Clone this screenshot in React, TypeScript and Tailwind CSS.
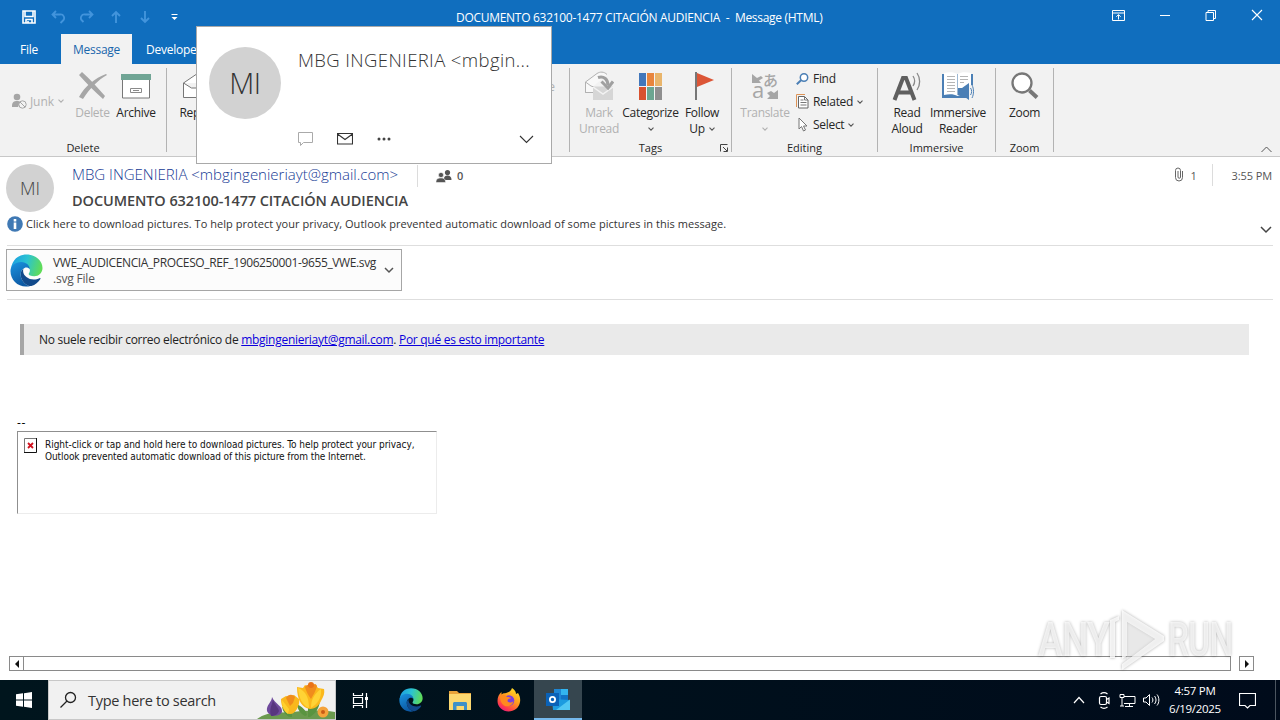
import React from "react";

type Kids = { children?: React.ReactNode };

function Icon({ w, h, children, className = "" }: Kids & { w: number; h: number; className?: string }) {
  return (
    <svg width={w} height={h} viewBox={`0 0 ${w} ${h}`} fill="none" className={`block shrink-0 ${className}`}>
      {children}
    </svg>
  );
}

function Caret({ color = "#555" }: { color?: string }) {
  return (
    <Icon w={6} h={4}>
      <path d="M.5 .7 3 3.2 5.5 .7" stroke={color} strokeWidth="1.1" />
    </Icon>
  );
}

function EdgeLogo({ size, id }: { size: number; id: string }) {
  return (
    <svg width={size} height={size} viewBox="0 0 34 34" className="block shrink-0">
      <defs>
        <linearGradient id={`${id}a`} x1="0" y1="0.2" x2="1" y2="0.4">
          <stop offset="0" stopColor="#1b9de2" />
          <stop offset="0.5" stopColor="#2bc3d2" />
          <stop offset="1" stopColor="#5fdc58" />
        </linearGradient>
        <linearGradient id={`${id}b`} x1="0" y1="0" x2="0.4" y2="1">
          <stop offset="0" stopColor="#1a94e0" />
          <stop offset="1" stopColor="#0c59a4" />
        </linearGradient>
      </defs>
      <path d="M1 15.500C2 6 8.500 .5 17 .5 27 .5 33.500 7.500 33.500 14.500c0 5-4 8.500-8.500 8.500-3.500 0-5.800-1-5.800-2.300 0-.9 1.300-1.600 1.300-4C20.500 13 17 9.500 12 9.500 7 9.500 3 12 1 15.500Z" fill={`url(#${id}a)`} />
      <path d="M.5 17.500C.5 12 5.500 8.300 11.500 8.300c5.500 0 9 4 9 7.500-1.500-1.800-3.800-2.300-5.500-1.500-3 1.500-4 4-4 6.700 0 6 5 11.500 10 12-1.500.4-3 .5-4.500.5C7.500 33.500.5 26.500.5 17.500Z" fill={`url(#${id}b)`} />
      <path d="M13.800 15.200C11.800 16.800 11 18.800 11 21c0 6.300 5 12 11 12 4-1.300 7.300-4 9.300-7.300.4-.8-.2-1.200-.9-.8-1.700.9-3.800 1.400-5.900 1.400-5.500 0-11-3.800-11-8.800 0-.8.100-1.600.3-2.300Z" fill="#114a8b" />
    </svg>
  );
}

function RibbonButton({ icon, width, lines, muted = false, caret }: { icon: React.ReactNode; width: string; lines: string[]; muted?: boolean; caret?: "below" | "inline" }) {
  return (
    <div className={`flex shrink-0 flex-col items-center ${width} ${muted ? "text-[#b1b1b1]" : "text-[#262626]"}`}>
      <div className="flex h-8 items-center justify-center">{icon}</div>
      <div className="mt-[3px] flex flex-col items-center text-[12px] leading-4 tracking-[-0.3px] whitespace-nowrap">
        {lines.map((line, i) => (
          <span key={line} className="flex items-center gap-1">
            {line}
            {caret === "inline" && i === lines.length - 1 && <Caret />}
          </span>
        ))}
        {caret === "below" && (
          <span className="flex h-4 items-center">
            <Caret color={muted ? "#b1b1b1" : "#555"} />
          </span>
        )}
      </div>
    </div>
  );
}

function Group({ width, label, children, launcher = false }: Kids & { width: string; label: string; launcher?: boolean }) {
  return (
    <section className={`flex h-[92px] shrink-0 ${width}`}>
      <div className="flex min-w-0 flex-1 flex-col">
        <div className="mt-1.5 flex h-[70px]">{children}</div>
        <div className="flex h-4 items-center justify-center">
          <span className="text-[11px] leading-4 whitespace-nowrap text-[#262626]">{label}</span>
        </div>
      </div>
      {launcher && (
        <div className="-ml-3 flex w-3 items-end pb-1 pl-px">
          <Icon w={8} h={8}>
            <path d="M.5 7.500V.5H7.500M3 3l4 4M7.500 3.500v4h-4" stroke="#444" />
          </Icon>
        </div>
      )}
      <div className="my-1 w-px bg-[#b3b3b3]" />
    </section>
  );
}

function TitleBar() {
  return (
    <div className="flex h-[34px] items-start text-white">
      <div className="ml-[22px] flex h-[33px] w-[434px] items-center gap-[15px]">
        <Icon w={14} h={14}>
          <path d="M1 1h12v12H1ZM3 1v5.500h8V1M4 13V9.500h6V13M6 11v2" stroke="#fff" strokeWidth="1.6" />
        </Icon>
        <Icon w={14} h={14}>
          <path d="M5 1 1.500 4.500 5 8M2 4.500h7a3.500 3.500 0 0 1 3 6L9.500 13" stroke="#4294dc" strokeWidth="1.800" />
        </Icon>
        <Icon w={14} h={14}>
          <path d="M9 1l3.500 3.500L9 8M12 4.500H5a3.500 3.500 0 0 0-3 6L3.500 12" stroke="#4294dc" strokeWidth="1.800" />
        </Icon>
        <Icon w={14} h={14}>
          <path d="M7 13V2M3 6l4-4 4 4" stroke="#4294dc" strokeWidth="1.900" />
        </Icon>
        <Icon w={14} h={14}>
          <path d="M7 1v11M3 8l4 4 4-4" stroke="#4294dc" strokeWidth="1.900" />
        </Icon>
        <Icon w={14} h={14}>
          <path d="M4.500 4.500h6" stroke="#fff" />
          <path d="M4.500 7h6l-3 3Z" fill="#fff" />
        </Icon>
      </div>
      <div className="h-9 w-[646px] text-[12px] leading-[36px] tracking-[-0.290px] whitespace-pre">DOCUMENTO 632100-1477 CITACIÓN AUDIENCIA  -  Message (HTML)</div>
      <div className="flex h-[30px] w-[178px] items-center pl-2.5">
        <Icon w={13} h={11}>
          <path d="M.5.5h12v10H.5ZM.5 3h12M6.500 9.500V4.800M4.300 6.800l2.200-2.200 2.200 2.200" stroke="#fff" />
        </Icon>
        <Icon w={12} h={11} className="ml-[34px]">
          <path d="M1 5.500h10" stroke="#fff" />
        </Icon>
        <Icon w={13} h={11} className="ml-[33px]">
          <path d="M2 2.500h7.500v8H2ZM4 2.500V.500h7.500v8H9.500" stroke="#fff" />
        </Icon>
        <Icon w={12} h={12} className="ml-[34px]">
          <path d="m1 1 10 10M11 1 1 11" stroke="#fff" strokeWidth="1.100" />
        </Icon>
      </div>
    </div>
  );
}

function Tabs() {
  return (
    <div className="flex h-[30px] text-[12px] leading-[32px] tracking-[-0.25px] text-white">
      <div className="w-[61px] pl-5 leading-[31px]">File</div>
      <div className="w-[71px] bg-[#f2f2f2] text-center text-[#1966ac]">Message</div>
      <div className="pl-3.5">Developer</div>
    </div>
  );
}

function SmallCommand({ icon, label, caret = false }: { icon: React.ReactNode; label: string; caret?: boolean }) {
  return (
    <div className="flex h-[23px] items-center">
      <span className="flex w-[17px] justify-start">{icon}</span>
      <span className="mr-1 text-[12px] tracking-[-0.3px] text-[#262626]">{label}</span>
      {caret && <Caret />}
    </div>
  );
}

function Ribbon() {
  return (
    <div className="flex h-[93px] border-b border-[#c8c8c8] bg-[#f2f2f2]">
      <Group width="w-[167px]" label="Delete">
        <div className="flex w-[72px] items-center pl-[11px]">
          <Icon w={16} h={16} className="mt-[-8px]">
            <circle cx="6" cy="4" r="3.300" fill="#a6a6a6" />
            <path d="M1 13c0-4 2-5 5-5 2 0 3 .5 3 1.500L7 14H1Z" fill="#a6a6a6" />
            <circle cx="11.500" cy="11.500" r="3.700" fill="#f2f2f2" stroke="#a6a6a6" />
            <path d="m9 9 5 5" stroke="#a6a6a6" />
          </Icon>
          <span className="mt-[-6px] mr-1 ml-[3px] text-[12px] tracking-[-0.1px] text-[#b1b1b1]">Junk</span>
          <span className="mt-[-8px]"><Caret color="#b1b1b1" /></span>
        </div>
        <RibbonButton
          width="w-[41px]"
          muted
          lines={["Delete"]}
          icon={
            <Icon w={30} h={28}>
              <path d="M1 3 4 0c8 7 15 15 23 24l-2 3C17 20 9 12 1 3Z" fill="#a6a6a6" />
              <path d="M29 3C20 8 12 16 5 27l-4-2C7 14 17 6 28 2Z" fill="#a6a6a6" />
            </Icon>
          }
        />
        <RibbonButton
          width="w-[46px]"
          lines={["Archive"]}
          icon={
            <Icon w={30} h={26}>
              <path d="M1.500 6h27v19h-27Z" fill="#fff" stroke="#777" />
              <path d="M0 1h30v6H0Z" fill="#70a595" />
              <path d="M9.500 15.500h11v4h-11ZM12 17.500h6" stroke="#8a8a8a" />
            </Icon>
          }
        />
      </Group>
      <Group width="w-[403px]" label="">
        <RibbonButton
          width="w-[54px]"
          lines={["Reply"]}
          icon={
            <Icon w={28} h={26} className="ml-1">
              <path d="M1.500 10 14 1.500 26.500 10v14.500h-25ZM1.500 10l8 5h9l8-5" stroke="#777" fill="#fff" />
            </Icon>
          }
        />
        <div className="mt-2 ml-auto pr-[14px] text-[12px] text-[#b1b1b1]">More</div>
      </Group>
      <Group width="w-[162px]" label="Tags" launcher>
        <div className="w-[7px]" />
        <RibbonButton
          width="w-[44px]"
          muted
          lines={["Mark", "Unread"]}
          icon={
            <Icon w={30} h={30}>
              <path d="M1.500 22V11L13 2.500c3-2 7-2 10 1" fill="#f8f8f8" stroke="#b1b1b1" />
              <path d="M1.500 11v10.500H10V16l-3-1Z" fill="#f8f8f8" stroke="#b1b1b1" />
              <path d="M9 15.500h20V29H9Z" fill="#d6d6d6" />
              <path d="m9 16 10 7 10-7" stroke="#f2f2f2" strokeWidth="1.500" />
              <path d="M14 6.500c6-2 10 2 10 8" stroke="#a0a0a0" strokeWidth="3" />
              <path d="M17.500 10.500 24 17l5-6.500" stroke="#a0a0a0" strokeWidth="3" />
            </Icon>
          }
        />
        <RibbonButton
          width="w-[59px]"
          caret="below"
          lines={["Categorize"]}
          icon={
            <div className="grid grid-cols-3 gap-px">
              <i className="h-[13px] w-[7px] bg-[#4277bb]" />
              <i className="h-[13px] w-[7px] bg-[#e8853d]" />
              <i className="h-[13px] w-[7px] bg-[#e9b56b]" />
              <i className="h-[13px] w-[7px] bg-[#d9512f]" />
              <i className="h-[13px] w-[7px] bg-[#6ca691]" />
              <i className="h-[13px] w-[7px] bg-[#8f8f8f]" />
            </div>
          }
        />
        <RibbonButton
          width="w-[44px]"
          caret="inline"
          lines={["Follow", "Up"]}
          icon={
            <Icon w={19} h={28} className="ml-1">
              <path d="M1 0v28" stroke="#777" strokeWidth="2" />
              <path d="M2 1v14l17-7Z" fill="#dc5637" />
            </Icon>
          }
        />
      </Group>
      <Group width="w-[146px]" label="Editing">
        <RibbonButton
          width="ml-2 w-[50px]"
          muted
          caret="below"
          lines={["Translate"]}
          icon={
            <div className="relative h-[30px] w-7 text-[#a6a6a6]">
              <Icon w={28} h={30}>
                <path d="M1 3v9h9L8 9.500l4-2.500-2-2-4 2ZM27 19v9H16l3-3-3-3 4-2 3 2Z" fill="#a6a6a6" />
              </Icon>
              <span className="absolute top-0 left-[12px] font-['Noto_Sans_CJK_JP',sans-serif] text-[15px] leading-[18px] font-medium">あ</span>
              <span className="absolute top-[8px] left-[1px] text-[22px] leading-[20px]">a</span>
            </div>
          }
        />
        <div className="-mt-[3px] ml-[6px] flex flex-col">
          <SmallCommand
            label="Find"
            icon={
              <Icon w={13} h={12}>
                <circle cx="8" cy="4.500" r="3.700" fill="#fff" stroke="#4b7fb5" strokeWidth="1.500" />
                <path d="M5.300 7 .8 11.300" stroke="#4b7fb5" strokeWidth="2" />
              </Icon>
            }
          />
          <SmallCommand
            label="Related"
            caret
            icon={
              <Icon w={13} h={15}>
                <path d="M9 .500H.500V13" stroke="#dd9458" />
                <path d="M2.500 2.500h6l3.500 3.500v8H2.500Z" fill="#fff" stroke="#666" />
                <path d="M8.500 2.500V6H12M4.500 6h3M4.500 8.500h6M4.500 11h6" stroke="#777" />
              </Icon>
            }
          />
          <SmallCommand
            label="Select"
            caret
            icon={
              <Icon w={13} h={15}>
                <path d="M3 1v11l2.500-2.500L7.500 14l2-1-2-4H11Z" fill="#fff" stroke="#777" />
              </Icon>
            }
          />
        </div>
      </Group>
      <Group width="w-[118px]" label="Immersive">
        <RibbonButton
          width="ml-2 w-[42px]"
          lines={["Read", "Aloud"]}
          icon={
            <Icon w={30} h={30}>
              <path d="M2.500 29 11 7h3l8.500 22M6 21.500h13" stroke="#5f5f5f" strokeWidth="4" />
              <path d="M21 5c2 3 2 7 0 10M25 2c3.500 5 3.500 12 0 17" stroke="#888" strokeWidth="1.300" />
            </Icon>
          }
        />
        <RibbonButton
          width="w-[60px]"
          lines={["Immersive", "Reader"]}
          icon={
            <Icon w={32} h={30}>
              <path d="M0 3h31v24H0Z" fill="#4b7fb5" />
              <path d="M2 2c5-1 10-1 13.500 1C19 1 24 1 29 2v22c-5-1-10-1-13.500 1C12 23 7 23 2 24Z" fill="#fff" />
              <path d="M15.500 3v21" stroke="#9db8d3" />
              <path d="M5 5.500h8M5 8.500h8M5 11.500h8M5 14.500h8M5 17.500h8M5 20.500h8M18 5.500h8M18 8.500h8M18 11.500h4" stroke="#b5b5b5" />
              <path d="M27 14h5v16h-5Z" fill="#f2f2f2" />
              <path d="M16 17h4l7-5v17l-7-5h-4Z" fill="#4b7fb5" />
              <path d="M28.500 17c1.500 2 1.500 5 0 7M30 14c2 4 2 9 0 13" stroke="#4b7fb5" />
            </Icon>
          }
        />
      </Group>
      <Group width="w-[58px]" label="Zoom">
        <RibbonButton
          width="w-[57px]"
          lines={["Zoom"]}
          icon={
            <Icon w={28} h={28}>
              <circle cx="11" cy="11" r="9.500" fill="#fff" stroke="#777" strokeWidth="2.300" />
              <path d="m18.500 18.500 7.500 7" stroke="#777" strokeWidth="4" />
            </Icon>
          }
        />
      </Group>
      <div className="flex flex-1 items-end justify-end pr-2 pb-[3px]">
        <Icon w={11} h={7}>
          <path d="m.5 6 5-5 5 5" stroke="#555" />
        </Icon>
      </div>
    </div>
  );
}

function MessageHeader() {
  return (
    <header className="flex h-[57px] pl-1.5">
      <div className="mt-[7px] flex size-12 items-center justify-center rounded-full bg-[#d2d2d2] text-[18px] font-light text-[#444]">MI</div>
      <div className="ml-[18px] flex w-[345px] flex-col">
        <div className="mt-[6px] h-[22px] text-[15px] leading-[22px] font-[350] whitespace-nowrap text-[#163a94]">MBG INGENIERIA &lt;mbgingenieriayt@gmail.com&gt;</div>
        <div className="mt-[5px] text-[14.500px] leading-[22px] font-semibold tracking-[-0.080px] whitespace-nowrap text-[#444]">DOCUMENTO 632100-1477 CITACIÓN AUDIENCIA</div>
      </div>
      <div className="mt-2 h-[22px] w-px bg-[#dcdcdc]" />
      <div className="mt-[7px] ml-[18px] flex h-6 items-center gap-[5px] text-[11px] font-semibold text-[#555]">
        <Icon w={16} h={13}>
          <circle cx="11.500" cy="2.600" r="2.600" fill="#555" />
          <path d="M8 9.500C8 6.500 9 5.500 11.500 5.500S15.500 7 15.500 10h-6Z" fill="#555" />
          <circle cx="5" cy="5" r="2.600" fill="#555" stroke="#fff" strokeWidth=".6" />
          <path d="M0 12.500C0 9 1.500 8 5 8s4.500 1.500 4.500 4.500Z" fill="#555" stroke="#fff" strokeWidth=".5" />
        </Icon>
        0
      </div>
      <div className="mt-[7px] mr-2 ml-auto flex h-6 items-center text-[11px] text-[#555]">
        <Icon w={10} h={15} className="mt-[-3px]">
          <path d="M8.500 4v6.500a3.500 3.500 0 0 1-7 0V3.500a2.500 2.500 0 0 1 5 0v6.500a1 1 0 0 1-2.500 0V4" stroke="#666" />
        </Icon>
        <span className="ml-[7px] w-[21px]">1</span>
        <span className="-mt-0.5 h-[22px] w-px bg-[#dcdcdc]" />
        <span className="ml-[19px] tracking-[-0.1px]">3:55 PM</span>
      </div>
    </header>
  );
}

function InfoBar() {
  return (
    <div className="ml-[7px] flex h-8 w-[1266px] border-b border-[#dedede]">
      <Icon w={16} h={16} className="mt-0.5">
        <circle cx="8" cy="8" r="7.800" fill="#4079b4" />
        <path d="M8 3v2.400M8 6.500V13" stroke="#fff" strokeWidth="2.600" />
      </Icon>
      <span className="ml-[3px] text-[11px] leading-[20px] tracking-[0.045px] whitespace-nowrap text-[#333]">
        Click here to download pictures. To help protect your privacy, Outlook prevented automatic download of some pictures in this message.
      </span>
      <Icon w={12} h={8} className="mt-3 mr-[1px] ml-auto">
        <path d="m1 1 5 5 5-5" stroke="#444" strokeWidth="1.500" />
      </Icon>
    </div>
  );
}

function Attachment() {
  return (
    <div className="ml-[7px] h-[54px] w-[1266px] border-b border-[#dedede] pt-[3px]">
      <div className="-ml-px flex h-[42px] w-[396px] items-center border border-[#a6a6a6] bg-[#fcfcfc] pl-[3px]">
        <EdgeLogo size={33} id="att" />
        <div className="mt-0.5 ml-[10px] flex w-[331px] flex-col text-[12px] leading-4 tracking-[-0.38px] whitespace-nowrap text-[#333]">
          <span>VWE_AUDICENCIA_PROCESO_REF_1906250001-9655_VWE.svg</span>
          <span className="tracking-[-0.200px] text-[#555]">.svg File</span>
        </div>
        <Icon w={10} h={7} className="mt-px">
          <path d="m1 1 4 4 4-4" stroke="#555" strokeWidth="1.500" />
        </Icon>
      </div>
    </div>
  );
}

function Body() {
  return (
    <main className="flex h-[380px] flex-col">
      <div className="mt-6 ml-5 h-[31px] w-[1229px] border-l-4 border-[#a6a6a6] bg-[#eaeaea] pl-[15px] text-[12px] leading-[31px] tracking-[-0.278px] whitespace-nowrap text-[#222]">
        No suele recibir correo electrónico de <a className="text-[#0c00dc] underline">mbgingenieriayt@gmail.com</a>. <a className="text-[#0c00dc] underline">Por qué es esto importante</a>
      </div>
      <div className="mt-[59px] ml-[17px] h-[17px] text-[12px] leading-[17px] font-medium tracking-[0.600px] text-black">--</div>
      <div className="ml-[17px] flex h-[83px] w-[420px] border border-t-[#8f8f8f] border-r-[#ececec] border-b-[#ececec] border-l-[#8f8f8f] pt-1.5 pl-1.5 font-['DejaVu_Sans_Condensed','DejaVu_Sans',sans-serif] text-[10px] leading-3 tracking-[-0.045px] text-[#111]">
        <Icon w={13} h={15}>
          <path d="M.5 14.500V.500h12" stroke="#777" />
          <path d="M0 14.500h12.500V0" stroke="#111" />
          <path d="m4 5 5 5M9 5l-5 5" stroke="#d0121f" strokeWidth="1.800" />
        </Icon>
        <p className="mt-px ml-2 whitespace-nowrap">
          Right-click or tap and hold here to download pictures. To help protect your privacy,
          <br />
          <span className="tracking-[-0.080px]">Outlook prevented automatic download of this picture from the Internet.</span>
        </p>
      </div>
      <div className="mt-[142px] ml-[9px] flex h-[15px]">
        <div className="flex w-[15px] items-center justify-center border border-[#8a8a8a] bg-white">
          <Icon w={4} h={8}><path d="M4 0v8L0 4Z" fill="#111" /></Icon>
        </div>
        <div className="w-[1207px] border border-l-0 border-[#8a8a8a] bg-white" />
        <div className="ml-2 flex w-[15px] items-center justify-center border border-[#8a8a8a] bg-white">
          <Icon w={4} h={8}><path d="M0 0v8l4-4Z" fill="#111" /></Icon>
        </div>
      </div>
    </main>
  );
}

function Flowers() {
  return (
    <Icon w={78} h={38} className="ml-auto">
      <path d="M0 38c8-6 20-8 32-6 14-3 32-3 46-1v7Z" fill="#6b9a4e" />
      <path d="M34 35c-1-5-5-8-9-9 1 5 4 8 7 10M50 34c-1-6-7-9-10-11 0 5 4 10 8 12M51 35c0-7 5-12 12-15-1 8-5 13-10 16" fill="#5a9440" />
      <path d="M52 36V22M34 36V27" stroke="#5a9440" strokeWidth="2" />
      <path d="M15 16c0 5-6 8-5 14 2 6 13 6 15 1 1-6-7-8-10-15Z" fill="#6f4a9c" />
      <path d="M16 19c-1 5-4 9-2 16 4 0 7-2 8-5-1-4-4-6-6-11Z" fill="#58367f" />
      <path d="M24 18l5-3 4 1 4-2 5 4c1 4-1 7-2 10-2 3-4 5-7 5-5 0-9-7-9-15Z" fill="#f9b81d" />
      <path d="M29 17c2-4 7-4 9-1l-2 6-3 3Z" fill="#f08c1c" />
      <path d="m25 19 7 9-1 5c-4-3-6-8-6-14Z" fill="#ffd12d" />
      <path d="M40 6l6 1 2-3 4 2 6-3 3 4 6 1c1 5-1 8-3 12-2 4-5 8-11 8-8-1-13-9-13-22Z" fill="#fbb81c" />
      <path d="M41 7c8 3 11 10 11 20-7-3-10-10-11-20ZM64 8c1 8-3 15-10 19 0-9 4-15 10-19Z" fill="#ffd335" />
      <path d="M48 6c2-3 5-3 7 0 1-3 4-4 5-1-1 5-4 9-6 13-3-4-5-8-6-12Z" fill="#f08c1c" />
      <circle cx="54" cy="4" r="3" fill="#ea7318" />
      <circle cx="66" cy="31" r="5.500" fill="#f5a33b" />
      <circle cx="66" cy="31" r="2" fill="#c95c16" />
    </Icon>
  );
}

function Taskbar() {
  return (
    <footer className="flex h-10 bg-linear-to-r from-[#00151d] to-[#000b1b] text-white">
      <div className="flex w-[48px] items-center justify-center">
        <Icon w={16} h={16}>
          <path d="M0 2.300 7 1.300V7.500H0ZM8 1.200 16 0v7.500H8ZM0 8.500h7v6.200l-7-1ZM8 8.500h8V16l-8-1.200Z" fill="#fff" />
        </Icon>
      </div>
      <div className="flex w-[288px] items-end border border-[#c8c8c8] bg-[#f1f1f1] text-[#333]">
        <Icon w={18} h={38} className="ml-[10px]">
          <circle cx="11.500" cy="16.500" r="5" stroke="#222" strokeWidth="1.300" />
          <path d="m8 20-6.500 6.500" stroke="#222" strokeWidth="1.300" />
        </Icon>
        <span className="ml-[11px] text-[14.500px] leading-[37px] tracking-[-0.290px] whitespace-nowrap">Type here to search</span>
        <Flowers />
      </div>
      <div className="flex w-[51px] items-center pl-4">
        <Icon w={17} h={17}>
          <path d="M1.500 1v2.500h9V1M1.500 16v-2.500h9V16M1.500 5.500h9v6h-9ZM14.500 1v15" stroke="#fff" strokeWidth="1.200" />
          <path d="M13 5h3v3h-3Z" fill="#fff" />
        </Icon>
      </div>
      <div className="flex w-[49px] items-center pl-3">
        <EdgeLogo size={24} id="tb" />
      </div>
      <div className="flex w-[49px] items-center pl-[13px]">
        <Icon w={22} h={20}>
          <path d="M0 1h8l2 2h12v5H0Z" fill="#e8a33a" />
          <path d="M0 4h22v16H0Z" fill="#fcd870" />
          <path d="M4 20v-6.500c0-1 .8-1.500 1.500-1.500h11c.8 0 1.500.5 1.500 1.500V20h-3v-4H7.500v4Z" fill="#3e90c8" />
        </Icon>
      </div>
      <div className="flex w-[49px] items-center pl-3">
        <Icon w={24} h={24}>
          <defs>
            <linearGradient id="fx" x1="0.8" y1="0" x2="0.2" y2="1">
              <stop offset="0" stopColor="#ffe226" />
              <stop offset="0.45" stopColor="#ff9a1f" />
              <stop offset="0.8" stopColor="#ff3d4a" />
              <stop offset="1" stopColor="#e31587" />
            </linearGradient>
          </defs>
          <path d="M15 0c3 2 4 4 4 6l2-1c2 3 2.500 6 2 9-1 6-6 9.500-11.500 9.500S.5 19 .5 13c0-4 1.500-7 4-9v2.500c1-1 2.500-1.300 3.500-1.200C10 4.500 14 4 15 0Z" fill="url(#fx)" />
          <circle cx="12" cy="12.500" r="5.300" fill="#7a3fe0" />
          <path d="M3 8c3-2 6-1 7 1 2 0 4 .5 4 1.300-2 .2-3.500 1-3.500 2.700 1 2 4 2 6 0-1 5-6 6.500-9.500 4.500C4 15.500 3 12 3 8Z" fill="#ff8a1e" />
        </Icon>
      </div>
      <div className="flex h-10 w-12 items-center border-b-2 border-[#76b9ed] bg-[#36464f] pl-3">
        <Icon w={24} h={24}>
          <path d="M8 2h14v11H8Z" fill="#1e86d4" />
          <path d="M15 2h7v6h-7Z" fill="#33b5ee" />
          <path d="M15 8h7v6h-7Z" fill="#1173c5" />
          <path d="M6 12l18 1v10H7Z" fill="#1c9be0" />
          <path d="m24 12.500-14 10.500h14Z" fill="#52c7f3" />
          <path d="M0 6h13v13H0Z" fill="#0a62b8" />
          <circle cx="6.500" cy="12.500" r="2.600" stroke="#fff" strokeWidth="1.800" />
        </Icon>
      </div>
      <div className="ml-auto flex items-center">
        <Icon w={12} h={8} className="mr-[13px]">
          <path d="m1 7 5-5.500L11 7" stroke="#fff" strokeWidth="1.200" />
        </Icon>
        <Icon w={13} h={17} className="mr-[8px]">
          <rect x="1.500" y="4.500" width="7" height="8" rx="1.500" stroke="#fff" strokeWidth="1.200" />
          <path d="M8.500 7.500 11 6v5.500L8.500 10M2.500 2C4.500.500 7.500.500 9.500 2M2.500 15c2 1.500 5 1.500 7 0" stroke="#fff" strokeWidth="1.200" />
        </Icon>
        <Icon w={17} h={15} className="mr-[7px]">
          <path d="M5 3.500h11v7H5M10.500 10.500v3M6 13.500h8M1 1.500h4v3H1ZM3 4.500V13M1 13h4" stroke="#fff" />
        </Icon>
        <Icon w={17} h={14} className="mr-[8px]">
          <path d="M.5 5h2.500L6.500 1.500v11L3 9H.500Z" stroke="#fff" />
          <path d="M9 4.500c1.200 1.500 1.200 3.500 0 5M11.500 3c2 2.500 2 5.500 0 8M14 1.500c2.500 3 2.500 8 0 11" stroke="#fff" />
        </Icon>
        <div className="flex w-[54px] flex-col items-center text-[11.500px] leading-[18px] tracking-[-0.300px] whitespace-nowrap">
          <span>4:57 PM</span>
          <span>6/19/2025</span>
        </div>
        <Icon w={17} h={17} className="ml-[17px]">
          <path d="M.5 1.500h16v12h-5.500l-2.500 2.500L6 13.500H.500Z" stroke="#fff" strokeWidth="1.200" />
        </Icon>
        <div className="mr-1 ml-[19px] h-10 w-px bg-[#4b5560]" />
      </div>
    </footer>
  );
}

function ContactCard() {
  return (
    <aside className="absolute top-[26px] left-[196px] flex h-[138px] w-[356px] border border-[#a9a9a9] bg-white">
      <div className="mt-5 ml-3 flex size-[72px] items-center justify-center rounded-full bg-[#d2d2d2] text-[29px] font-light tracking-[-0.5px] text-[#333]">MI</div>
      <div className="ml-[17px] flex flex-1 flex-col">
        <div className="mt-[19px] h-7 text-[18.500px] leading-7 font-[350] tracking-[0.380px] whitespace-nowrap text-[#333]">MBG INGENIERIA &lt;mbgin...</div>
        <div className="mt-[56px] flex h-[18px] items-center">
          <Icon w={15} h={14}>
            <path d="M.5.500h14v10H5.500l-3 3v-3h-2Z" stroke="#aaa" />
          </Icon>
          <Icon w={16} h={12} className="ml-6">
            <path d="M.5.500h15v10.500H.500ZM.5 1l7.500 5.500L15.500 1" stroke="#333" strokeWidth="1.100" />
          </Icon>
          <Icon w={14} h={4} className="ml-6">
            <circle cx="2" cy="2" r="1.500" fill="#444" />
            <circle cx="7" cy="2" r="1.500" fill="#444" />
            <circle cx="12" cy="2" r="1.500" fill="#444" />
          </Icon>
          <Icon w={15} h={9} className="mr-[17px] ml-auto">
            <path d="m1 1 6.500 6.500L14 1" stroke="#333" strokeWidth="1.100" />
          </Icon>
        </div>
      </div>
    </aside>
  );
}

function Watermark() {
  return (
    <div className="absolute top-[608px] left-[1038px] flex h-16 w-[196px] items-center text-white/70 drop-shadow-[0_0_1.5px_rgba(0,0,0,0.4)]">
      <span className="w-[68px] origin-left scale-x-[0.76] font-['Roboto',sans-serif] text-[49px] leading-[64px] font-medium tracking-[-1px]">ANY</span>
      <Icon w={62} h={64}>
        <path d="M4 50V12l9-4v4l-4 2v36Z" fill="#fff" fillOpacity=".8" />
        <path d="M16 2 58 28v5L16 62v-6l33-25-28-17v34l-5 3Z" fill="#fff" fillOpacity=".8" />
        <path d="m21 14 28 17-28 21Z" fill="#fff" fillOpacity=".35" />
      </Icon>
      <span className="origin-left scale-x-[0.68] font-['Roboto',sans-serif] text-[49px] leading-[64px] font-medium tracking-[-1px]">RUN</span>
    </div>
  );
}

export default function App() {
  return (
    <div className="relative h-[720px] w-[1280px] overflow-hidden bg-white font-['Open_Sans','Noto_Sans',sans-serif]">
      <div className="bg-[#106ebe]">
        <TitleBar />
        <Tabs />
      </div>
      <Ribbon />
      <MessageHeader />
      <InfoBar />
      <Attachment />
      <Body />
      <Taskbar />
      <ContactCard />
      <Watermark />
    </div>
  );
}
